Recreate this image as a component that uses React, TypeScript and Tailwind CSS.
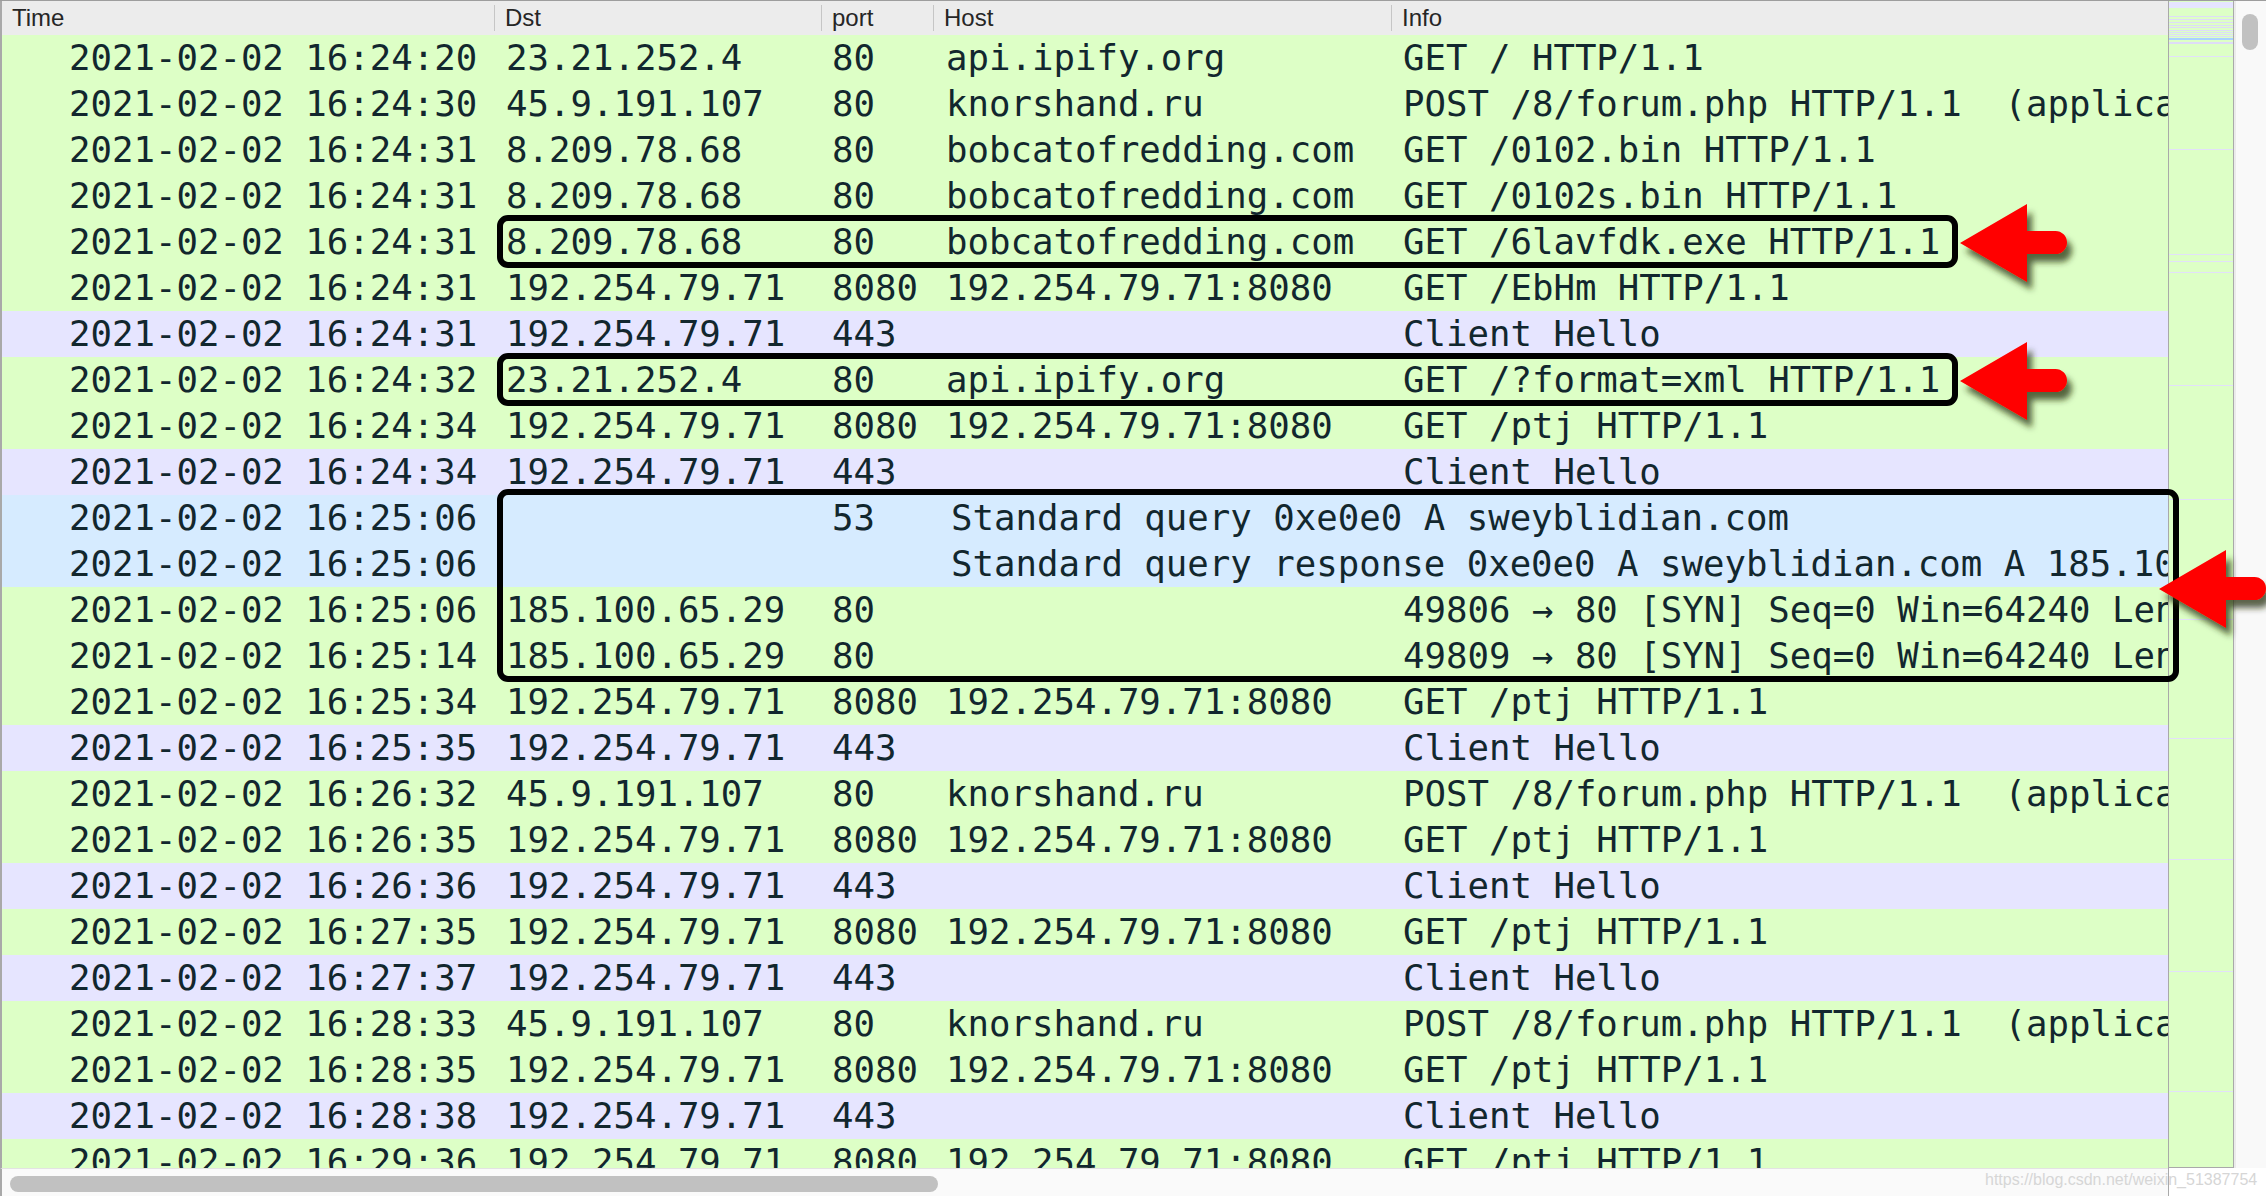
import React from 'react';

type Kind = 'http' | 'tcp' | 'dns';

type Packet = {
  time: string;
  dst: string;
  port: string;
  host: string;
  info: string;
  kind: Kind;
  infoInHost?: boolean;
};

const day = '2021-02-02 ';

const packets: Packet[] = [
  { time: '16:24:20', dst: '23.21.252.4', port: '80', host: 'api.ipify.org', info: 'GET / HTTP/1.1', kind: 'http' },
  { time: '16:24:30', dst: '45.9.191.107', port: '80', host: 'knorshand.ru', info: 'POST /8/forum.php HTTP/1.1  (application/octet-stream)', kind: 'http' },
  { time: '16:24:31', dst: '8.209.78.68', port: '80', host: 'bobcatofredding.com', info: 'GET /0102.bin HTTP/1.1', kind: 'http' },
  { time: '16:24:31', dst: '8.209.78.68', port: '80', host: 'bobcatofredding.com', info: 'GET /0102s.bin HTTP/1.1', kind: 'http' },
  { time: '16:24:31', dst: '8.209.78.68', port: '80', host: 'bobcatofredding.com', info: 'GET /6lavfdk.exe HTTP/1.1', kind: 'http' },
  { time: '16:24:31', dst: '192.254.79.71', port: '8080', host: '192.254.79.71:8080', info: 'GET /EbHm HTTP/1.1', kind: 'http' },
  { time: '16:24:31', dst: '192.254.79.71', port: '443', host: '', info: 'Client Hello', kind: 'tcp' },
  { time: '16:24:32', dst: '23.21.252.4', port: '80', host: 'api.ipify.org', info: 'GET /?format=xml HTTP/1.1', kind: 'http' },
  { time: '16:24:34', dst: '192.254.79.71', port: '8080', host: '192.254.79.71:8080', info: 'GET /ptj HTTP/1.1', kind: 'http' },
  { time: '16:24:34', dst: '192.254.79.71', port: '443', host: '', info: 'Client Hello', kind: 'tcp' },
  { time: '16:25:06', dst: '', port: '53', host: '', info: 'Standard query 0xe0e0 A sweyblidian.com', kind: 'dns', infoInHost: true },
  { time: '16:25:06', dst: '', port: '', host: '', info: 'Standard query response 0xe0e0 A sweyblidian.com A 185.100.65.29', kind: 'dns', infoInHost: true },
  { time: '16:25:06', dst: '185.100.65.29', port: '80', host: '', info: '49806 → 80 [SYN] Seq=0 Win=64240 Len=0 MSS=1460', kind: 'http' },
  { time: '16:25:14', dst: '185.100.65.29', port: '80', host: '', info: '49809 → 80 [SYN] Seq=0 Win=64240 Len=0 MSS=1460', kind: 'http' },
  { time: '16:25:34', dst: '192.254.79.71', port: '8080', host: '192.254.79.71:8080', info: 'GET /ptj HTTP/1.1', kind: 'http' },
  { time: '16:25:35', dst: '192.254.79.71', port: '443', host: '', info: 'Client Hello', kind: 'tcp' },
  { time: '16:26:32', dst: '45.9.191.107', port: '80', host: 'knorshand.ru', info: 'POST /8/forum.php HTTP/1.1  (application/octet-stream)', kind: 'http' },
  { time: '16:26:35', dst: '192.254.79.71', port: '8080', host: '192.254.79.71:8080', info: 'GET /ptj HTTP/1.1', kind: 'http' },
  { time: '16:26:36', dst: '192.254.79.71', port: '443', host: '', info: 'Client Hello', kind: 'tcp' },
  { time: '16:27:35', dst: '192.254.79.71', port: '8080', host: '192.254.79.71:8080', info: 'GET /ptj HTTP/1.1', kind: 'http' },
  { time: '16:27:37', dst: '192.254.79.71', port: '443', host: '', info: 'Client Hello', kind: 'tcp' },
  { time: '16:28:33', dst: '45.9.191.107', port: '80', host: 'knorshand.ru', info: 'POST /8/forum.php HTTP/1.1  (application/octet-stream)', kind: 'http' },
  { time: '16:28:35', dst: '192.254.79.71', port: '8080', host: '192.254.79.71:8080', info: 'GET /ptj HTTP/1.1', kind: 'http' },
  { time: '16:28:38', dst: '192.254.79.71', port: '443', host: '', info: 'Client Hello', kind: 'tcp' },
  { time: '16:29:36', dst: '192.254.79.71', port: '8080', host: '192.254.79.71:8080', info: 'GET /ptj HTTP/1.1', kind: 'http' },
];

const rowBg: Record<Kind, string> = {
  http: 'bg-[#ddffc6]',
  tcp: 'bg-[#e6e5ff]',
  dns: 'bg-[#d6ebff]',
};

// thin marker lines in the packet minimap: [y, height, colour]
const miniLines: [number, number, string][] = [
  [1, 6, '#e6e5ff'],
  [15, 1, '#dedcf8'],
  [18, 1, '#dedcf8'],
  [21, 1, '#dedcf8'],
  [24, 1, '#dedcf8'],
  [26, 1, '#dedcf8'],
  [29, 1, '#dedcf8'],
  [31, 1, '#dedcf8'],
  [33, 1, '#dedcf8'],
  [35, 1, '#dedcf8'],
  [37, 2, '#a9d3ff'],
  [41, 2, '#dedcf8'],
  [55, 1, '#e2e0fa'],
  [148, 1, '#e2e0fa'],
  [253, 1, '#e2e0fa'],
  [260, 1, '#e2e0fa'],
  [271, 1, '#e2e0fa'],
  [384, 1, '#e2e0fa'],
  [498, 1, '#e2e0fa'],
  [618, 1, '#e2e0fa'],
  [737, 1, '#e2e0fa'],
  [858, 1, '#e2e0fa'],
  [970, 1, '#e2e0fa'],
  [1090, 1, '#e2e0fa'],
];

function HeaderCell({ label, className, first }: { label: string; className: string; first?: boolean }) {
  return (
    <div className={`flex items-center shrink-0 ${className}`}>
      {!first && <div className="w-px h-[26px] bg-[#c6c6c6]" />}
      <span className="pl-[10px]">{label}</span>
    </div>
  );
}

function PacketRow({ p }: { p: Packet }) {
  return (
    <div className={`flex h-[46px] shrink-0 whitespace-pre ${rowBg[p.kind]}`}>
      <div className="w-[492px] shrink-0 pl-[67px]">{day + p.time}</div>
      <div className="w-[327px] shrink-0 pl-[12px]">{p.dst}</div>
      <div className="w-[112px] shrink-0 pl-[11px]">{p.port}</div>
      {p.infoInHost ? (
        <div className="w-[458px] shrink-0 pl-[18px]">{p.info}</div>
      ) : (
        <>
          <div className="w-[458px] shrink-0 pl-[13px]">{p.host}</div>
          <div className="flex-1 min-w-0 pl-[12px]">{p.info}</div>
        </>
      )}
    </div>
  );
}

function RedArrow({ id, className }: { id: string; className: string }) {
  return (
    <svg className={`absolute overflow-visible ${className}`} width="108" height="80" viewBox="0 0 108 80">
      <defs>
        <filter id={id} x="-30%" y="-30%" width="170%" height="170%">
          <feDropShadow dx="5" dy="8" stdDeviation="3" floodColor="#263018" floodOpacity="0.75" />
        </filter>
      </defs>
      <path
        d="M0 39 L67 0 L67 27 L95.5 27 A11.5 11.5 0 0 1 95.5 50 L67 50 L67 78 Z"
        fill="#ff0000"
        filter={`url(#${id})`}
      />
    </svg>
  );
}

export default function App() {
  return (
    <div className="relative w-[2266px] h-[1196px] overflow-hidden bg-white border-t border-[#9d9d9d] flex flex-col">
      <div className="flex h-[1167px] shrink-0">
        {/* packet list */}
        <div className="w-[2168px] shrink-0 overflow-hidden border-l-2 border-[#a9a9a9] flex flex-col">
          <div className="flex h-[34px] shrink-0 bg-[#ececec] text-[24px] text-[#262626] font-['Liberation_Sans',Arial,sans-serif]">
            <HeaderCell label="Time" className="w-[492px]" first />
            <HeaderCell label="Dst" className="w-[327px]" />
            <HeaderCell label="port" className="w-[112px]" />
            <HeaderCell label="Host" className="w-[458px]" />
            <HeaderCell label="Info" className="flex-1" />
          </div>
          <div className="flex flex-col text-[35.7px] leading-[46px] text-[#12272e] font-['DejaVu_Sans_Mono',monospace]">
            {packets.map((p, i) => (
              <PacketRow key={i} p={p} />
            ))}
          </div>
        </div>

        {/* minimap */}
        <div className="w-[66px] shrink-0 border-x border-b border-[#a9a9a9] bg-[#ddffc6]">
          <svg width="64" height="1166" viewBox="0 0 64 1166" className="block">
            {miniLines.map(([y, h, c], i) => (
              <rect key={i} x="0" y={y} width="64" height={h} fill={c} />
            ))}
          </svg>
        </div>

        {/* vertical scrollbar */}
        <div className="flex-1 bg-[#f9f9f9] border-l-2 border-[#ebebeb]">
          <div className="ml-[6px] mt-[13px] w-[16px] h-[36px] rounded-full bg-[#c1c1c1]" />
        </div>
      </div>

      <div className="flex flex-1">
        <div className="w-[2168px] shrink-0 bg-[#fafafa] border-t border-[#e3e3e3] border-l-2 border-l-[#a9a9a9]">
          <div className="ml-[8px] mt-[7px] w-[928px] h-[16px] rounded-full bg-[#c1c1c1]" />
        </div>
        <div className="flex-1 bg-white border-l border-[#a9a9a9]" />
      </div>

      {/* annotations */}
      <div className="absolute left-[497px] top-[214px] w-[1461px] h-[53px] border-[6px] border-black rounded-[11px]" />
      <div className="absolute left-[497px] top-[352px] w-[1461px] h-[53px] border-[6px] border-black rounded-[11px]" />
      <div className="absolute left-[497px] top-[488px] w-[1682px] h-[193px] border-[6px] border-black rounded-[11px]" />

      <RedArrow id="a1" className="left-[1960px] top-[203px]" />
      <RedArrow id="a2" className="left-[1960px] top-[341px]" />
      <RedArrow id="a3" className="left-[2159px] top-[549px]" />

      <div className="absolute left-[1985px] top-[1170px] text-[16px] leading-[18px] text-[#d6d6d6] font-['Liberation_Sans',Arial,sans-serif]">
        https://blog.csdn.net/weixin_51387754
      </div>
    </div>
  );
}
